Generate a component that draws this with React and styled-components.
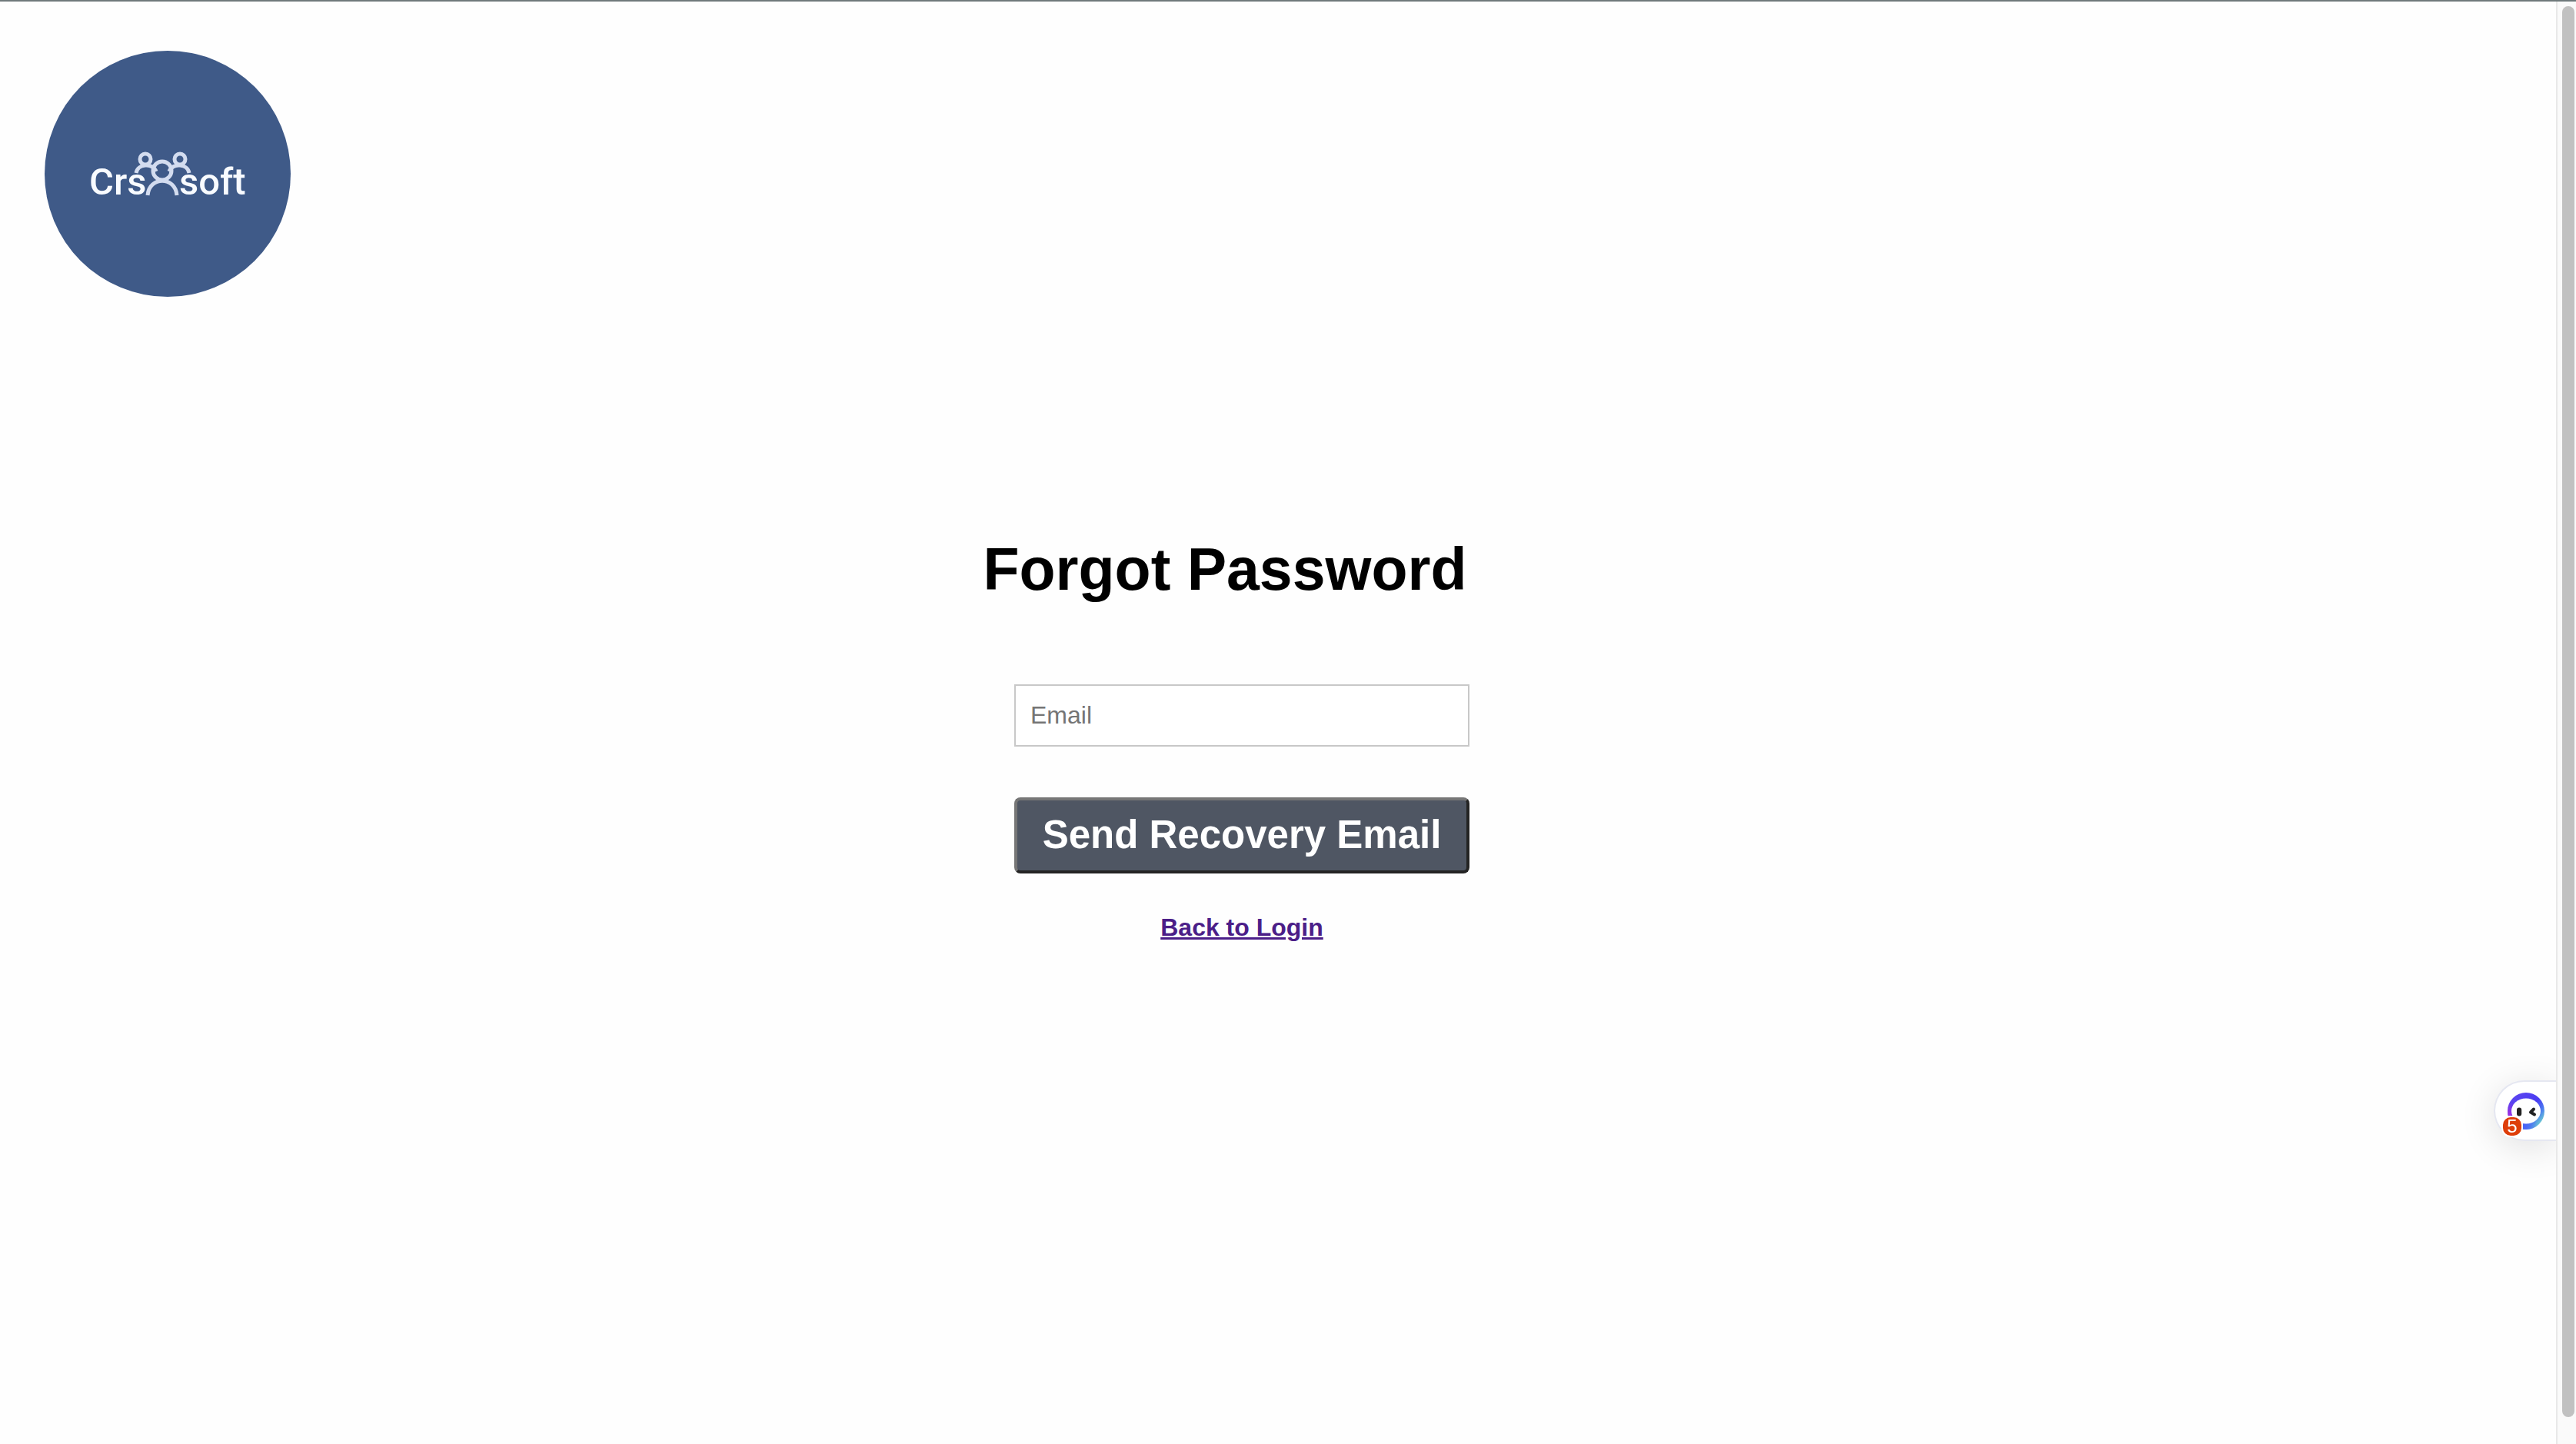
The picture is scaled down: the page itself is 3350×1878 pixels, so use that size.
import React from 'react';
import styled, { createGlobalStyle } from 'styled-components';

const GlobalStyle = createGlobalStyle`
  *, *::before, *::after { box-sizing: border-box; }
  body {
    margin: 0;
    background: #fefefe;
    color: #000;
    font-family: "Liberation Sans", Helvetica, Arial, sans-serif;
  }
`;

const Page = styled.div`
  display: grid;
  grid-template-columns: 1fr 26px;
  min-height: 100vh;
  border-top: 2px solid #6f797b;
`;

const Content = styled.div`
  display: flex;
  flex-direction: column;
  padding: 64px 94px 64px 0;
`;

const Header = styled.header`
  display: flex;
  padding-left: 58px;
`;

const LogoCircle = styled.div`
  width: 320px;
  height: 320px;
  border-radius: 50%;
  background: #3f5a88;

  svg {
    display: block;
    width: 100%;
    height: 100%;
  }
`;

const LogoText = styled.text`
  font-family: Roboto, "Open Sans", sans-serif;
  font-size: 49px;
  font-weight: 500;
  fill: #f8fbff;
`;

const Main = styled.main`
  display: flex;
  flex-direction: column;
  align-items: center;
  padding-top: 308px;
`;

const Title = styled.h1`
  margin: 0 44px 104px 0;
  font-size: 77px;
  line-height: 92px;
  font-weight: 700;
`;

const Form = styled.form`
  display: flex;
  flex-direction: column;
  align-items: stretch;
  width: 592px;
`;

const Field = styled.input`
  height: 81px;
  padding: 0 19px 1px;
  border: 2px solid #c8c8c8;
  border-radius: 0;
  background: #fff;
  color: #000;
  font: 400 32px/36px "Liberation Sans", Helvetica, Arial, sans-serif;

  &::placeholder {
    color: #757575;
    opacity: 1;
  }
`;

const SubmitButton = styled.button`
  margin-top: 66px;
  padding: 16px 0 17px;
  border: 4px solid;
  border-color: #767676 #242424 #242424 #767676;
  border-radius: 8px;
  background: #4f5663;
  color: #fff;
  font: 700 51px/58px "Liberation Sans", Helvetica, Arial, sans-serif;
  white-space: nowrap;
  cursor: pointer;
`;

const BackLink = styled.a`
  align-self: center;
  margin-top: 52px;
  color: #4b1e88;
  font-size: 32px;
  line-height: 36px;
  font-weight: 700;
  text-decoration: underline;
`;

const ScrollTrack = styled.div`
  display: flex;
  padding: 6px 2px 35px 6px;
  border-left: 2px solid #e8e8e8;
  background: #fafafa;
`;

const ScrollThumb = styled.div`
  flex: 1;
  border-radius: 8px;
  background: #c1c1c1;
`;

const AssistantClip = styled.div`
  position: fixed;
  top: 1325px;
  right: 26px;
  padding: 80px 0 80px 80px;
  overflow: hidden;
  pointer-events: none;
`;

const AssistantTab = styled.button`
  position: relative;
  display: flex;
  align-items: center;
  width: 81px;
  height: 79px;
  padding: 0 0 0 16px;
  border: 2px solid #e5e7f1;
  border-right: 0;
  border-radius: 40px 0 0 40px;
  background: #fff;
  box-shadow: 0 8px 48px rgba(0, 0, 0, 0.12);
  pointer-events: auto;
  cursor: pointer;

  svg {
    display: block;
    width: 48px;
    height: 48px;
  }
`;

const Badge = styled.span`
  position: absolute;
  left: 8px;
  bottom: 3px;
  width: 28px;
  height: 28px;
  border: 2px solid #fff;
  border-radius: 12px;
  background: #de3e0a;
  color: #fff;
  font: 400 24px/24px "Liberation Sans", Helvetica, Arial, sans-serif;
  text-align: center;
`;

function Logo() {
  return (
    <LogoCircle>
      <svg viewBox="0 0 320 320" role="img" aria-label="Crs soft">
        <g fill="none" stroke="#d3dcef" strokeWidth="5">
          <circle cx="131" cy="141" r="7" />
          <circle cx="176" cy="141" r="7" />
          <path d="M119 159C121 147 140 145 145 157" />
          <path d="M162 157C167 145 186 147 188 159" />
          <circle cx="153" cy="156" r="12" />
          <path d="M134 188C136 163 170 163 172 188" />
        </g>
        <LogoText x="58" y="187">Crs</LogoText>
        <LogoText x="175" y="187">soft</LogoText>
      </svg>
    </LogoCircle>
  );
}

function AssistantFace() {
  return (
    <svg viewBox="0 0 48 48" aria-hidden="true">
      <defs>
        <linearGradient id="ring" x1="0.1" y1="0.2" x2="0.9" y2="0.9">
          <stop offset="0" stopColor="#5b45f0" />
          <stop offset="0.5" stopColor="#4a3cf2" />
          <stop offset="0.75" stopColor="#4b7cf0" />
          <stop offset="1" stopColor="#72dccb" />
        </linearGradient>
        <radialGradient id="violet" cx="0.02" cy="0.6" r="0.35">
          <stop offset="0" stopColor="#a12fe0" />
          <stop offset="1" stopColor="#a12fe0" stopOpacity="0" />
        </radialGradient>
        <radialGradient id="azure" cx="0.45" cy="1" r="0.4">
          <stop offset="0" stopColor="#4a63f6" />
          <stop offset="1" stopColor="#4a63f6" stopOpacity="0" />
        </radialGradient>
      </defs>
      <circle cx="24" cy="24" r="24" fill="url(#ring)" />
      <circle cx="24" cy="24" r="24" fill="url(#violet)" />
      <circle cx="24" cy="24" r="24" fill="url(#azure)" />
      <ellipse cx="24" cy="24" rx="19" ry="16.5" fill="#fff" />
      <rect x="12" y="19.5" width="6.2" height="11" rx="3" fill="#222" />
      <path d="M34 21.5L30 25.5L35 28.5" fill="none" stroke="#222" strokeWidth="4" strokeLinecap="round" strokeLinejoin="round" />
    </svg>
  );
}

export default function App() {
  return (
    <>
      <GlobalStyle />
      <Page>
        <Content>
          <Header>
            <Logo />
          </Header>
          <Main>
            <Title>Forgot Password</Title>
            <Form onSubmit={(event) => event.preventDefault()}>
              <Field type="email" name="email" placeholder="Email" aria-label="Email" />
              <SubmitButton type="submit">Send Recovery Email</SubmitButton>
              <BackLink href="#login">Back to Login</BackLink>
            </Form>
          </Main>
        </Content>
        <ScrollTrack aria-hidden="true">
          <ScrollThumb />
        </ScrollTrack>
      </Page>
      <AssistantClip>
        <AssistantTab type="button" aria-label="Open assistant">
          <AssistantFace />
          <Badge>5</Badge>
        </AssistantTab>
      </AssistantClip>
    </>
  );
}
